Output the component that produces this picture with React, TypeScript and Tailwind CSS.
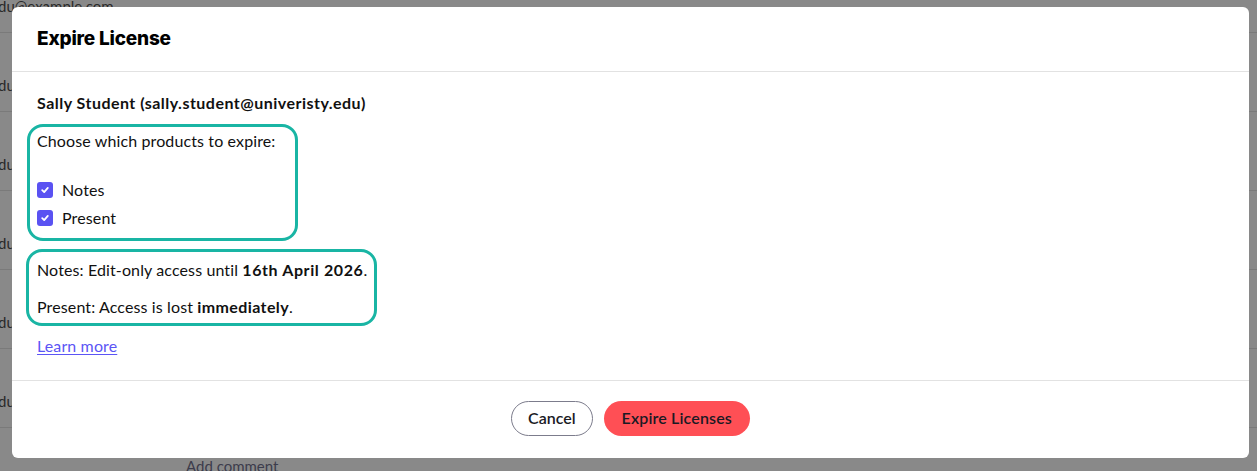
import React from "react";

const body = { fontFamily: "Lato, 'Open Sans', sans-serif" };
const head = { fontFamily: "Inter, 'Noto Sans', sans-serif" };

function Check() {
  return (
    <span className="flex h-[16px] w-[16px] items-center justify-center rounded-[3px] bg-[#5a52f2]">
      <svg width="10" height="10" viewBox="0 0 10 10" fill="none">
        <path d="M2.2 5.2 L4.2 7.1 L7.8 2.9" stroke="white" strokeWidth="1.8" strokeLinecap="round" strokeLinejoin="round" />
      </svg>
    </span>
  );
}

export default function App() {
  const rows = [0, 1, 2, 3, 4, 5];
  return (
    <div className="relative h-[471px] w-[1257px] overflow-hidden bg-[#898989]" style={body}>
      {/* background page */}
      <div className="-mt-[46px] flex flex-col">
        {rows.map((i) => (
          <div key={i} className="flex h-[79px] flex-col justify-end border-b border-[#7a7a7a] pb-[16px]">
            <span className="-ml-[2px] text-[15px] leading-[20px] text-[#2a2a2a]">
              {i === 0 ? "du@example.com" : "du"}
            </span>
          </div>
        ))}
        <div className="pl-[186px] pt-[28px] text-[15px] leading-[20px] text-[#3c3c4c]">Add comment</div>
      </div>

      {/* modal */}
      <div className="absolute left-[12px] top-[7px] flex h-[451px] w-[1237px] flex-col rounded-[6px] bg-white">
        <div className="flex h-[65px] items-center border-b border-[#e2e2e2] px-[25px]">
          <h2 className="text-[19px] font-extrabold tracking-[-0.2px] text-black" style={head}>
            Expire License
          </h2>
        </div>
        <div className="flex flex-1 flex-col whitespace-nowrap px-[25px] pt-[21px] text-[16px] leading-[20px] tracking-[0.12px] text-[#111]">
          <div className="font-bold tracking-[0.48px]">Sally Student (sally.student@univeristy.edu)</div>
          <div className="-mx-[10px] mt-[11px] w-[271px] rounded-[16px] border-[3px] border-[#19b5a4] px-[7px] pb-[10px] pt-[4px]">
            <div>Choose which products to expire:</div>
            <div className="mt-[29px] flex items-center gap-[9px]">
              <Check />
              <span>Notes</span>
            </div>
            <div className="mt-[8px] flex items-center gap-[9px]">
              <Check />
              <span>Present</span>
            </div>
          </div>
          <div className="-mx-[11px] mt-[8px] w-[351px] rounded-[16px] border-[3px] border-[#19b5a4] px-[8px] pb-[6px] pt-[8px]">
            <div>
              Notes: Edit-only access until <b className="tracking-[0.6px]">16th April 2026</b>.
            </div>
            <div className="mt-[17px]">
              Present: Access is lost <b className="tracking-[0.4px]">immediately</b>.
            </div>
          </div>
          <a className="mt-[10px] w-fit text-[#5b55f5] underline underline-offset-2">Learn more</a>
        </div>
        <div className="flex h-[78px] items-center justify-center gap-[11px] border-t border-[#e2e2e2] pb-[3px]">
          <button className="h-[35px] rounded-full border border-[#7c7c8c] px-[16px] text-[16px] font-semibold text-[#1a1a24]">
            Cancel
          </button>
          <button className="h-[35px] rounded-full bg-[#ff4f55] px-[18px] text-[16px] font-semibold tracking-[0.15px] text-[#1a1a24]">
            Expire Licenses
          </button>
        </div>
      </div>
    </div>
  );
}
